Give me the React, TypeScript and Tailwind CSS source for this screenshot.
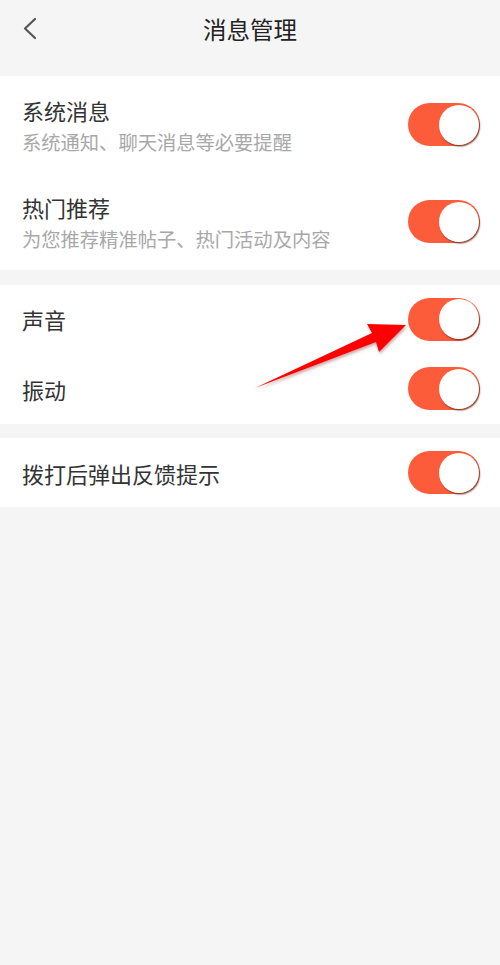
import React from "react";

type Row = { title: string; desc?: string };

const groups: { rows: Row[]; rowH: string }[] = [
  {
    rowH: "h-[97px]",
    rows: [
      { title: "系统消息", desc: "系统通知、聊天消息等必要提醒" },
      { title: "热门推荐", desc: "为您推荐精准帖子、热门活动及内容" },
    ],
  },
  { rowH: "h-[69.5px]", rows: [{ title: "声音" }, { title: "振动" }] },
  { rowH: "h-[69px]", rows: [{ title: "拨打后弹出反馈提示" }] },
];

function Toggle() {
  return (
    <div className="flex h-[43px] w-[72px] items-center justify-end rounded-full bg-[#fd5c3b] pr-[1.5px]">
      <div className="h-[40px] w-[40px] rounded-full bg-white shadow-[1px_1.5px_1.5px_rgba(110,40,20,0.75)]" />
    </div>
  );
}

export default function App() {
  return (
    <div
      className="relative h-[965px] w-[500px] bg-[#f5f5f5] text-[#333]"
      style={{ fontFamily: '"Noto Sans CJK SC", "Noto Sans", sans-serif' }}
    >
      {/* Header */}
      <div className="relative flex h-[60px] items-center justify-center">
        <svg
          className="absolute left-[22px] top-[17px]"
          width="16"
          height="23"
          viewBox="0 0 16 23"
          fill="none"
        >
          <path d="M13 2 L3 11.5 L13 21" stroke="#555" strokeWidth="2.2" strokeLinecap="round" strokeLinejoin="round" />
        </svg>
        <span className="text-[23.5px] leading-none text-[#222]">消息管理</span>
      </div>

      {/* Groups */}
      <div className="mt-[16px] flex flex-col gap-[14.5px]">
        {groups.map((g, gi) => (
          <div key={gi} className="bg-white">
            {g.rows.map((r) => (
              <div key={r.title} className={`flex items-center justify-between pl-[22px] pr-[20px] ${g.rowH}`}>
                <div className="flex flex-col">
                  <span className="text-[22px] leading-[30px] text-[#333]">{r.title}</span>
                  {r.desc && (
                    <span className="mt-[4px] text-[19.3px] leading-[26px] text-[#a8a8a8]">{r.desc}</span>
                  )}
                </div>
                <Toggle />
              </div>
            ))}
          </div>
        ))}
      </div>

      {/* Annotation arrow */}
      <svg
        className="pointer-events-none absolute left-0 top-0"
        width="500"
        height="965"
        viewBox="0 0 500 965"
      >
        <defs>
          <filter id="sh" x="-10%" y="-10%" width="130%" height="130%">
            <feDropShadow dx="1" dy="2" stdDeviation="1.5" floodColor="#600" floodOpacity="0.35" />
          </filter>
        </defs>
        <polygon
          points="255,388 372,333 367,324 406,325 379,352 376,342"
          fill="#ff0000"
          filter="url(#sh)"
        />
      </svg>
    </div>
  );
}
